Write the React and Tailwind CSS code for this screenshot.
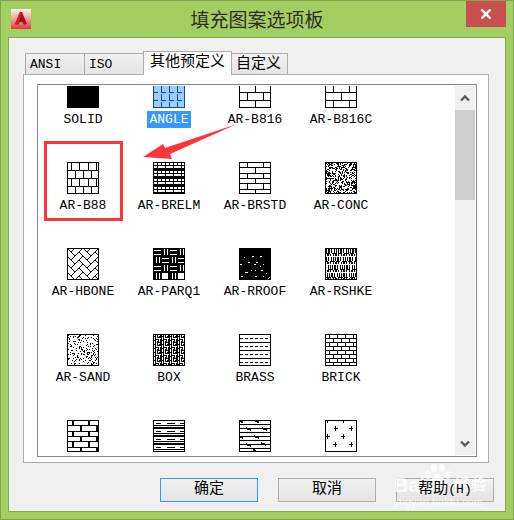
import { useState } from 'react';

const tabs = ['ANSI', 'ISO', '其他预定义', '自定义'];

// Courses of bricks: [top, bottom, x of the vertical joints, joint width]
const courses = {
  'AR-B816': [[0, 8, [8, 24]], [8, 16, [16]], [16, 24, [8, 24]], [24, 31, [16]]],
  'AR-B816C': [[0, 8, [16]], [8, 16, [8, 24]], [16, 24, [16]], [24, 31, [8, 24]]],
  'AR-B88': [[0, 8, [4, 12, 21, 29]], [8, 16, [8, 16, 24]], [16, 24, [4, 12, 21, 29]], [24, 31, [8, 16, 24]]],
  'AR-BRSTD': [[0, 5, [8, 24]], [5, 11, [16]], [11, 16, [8, 24]], [16, 21, [16]], [21, 27, [8, 24]], [27, 31, [16]]],
  BRICK: [0, 4, 8, 12, 16, 20, 24, 28].map((y, i) => [
    y,
    Math.min(y + 4, 31),
    i % 2 ? [8, 16, 24] : [4, 12, 20, 28],
  ]),
  BRSTONE: [
    [0, 5, [5, 21], 2],
    [5, 11, [13, 29], 2],
    [11, 16, [5, 21], 2],
    [16, 21, [13, 29], 2],
    [21, 27, [5, 21], 2],
    [27, 31, [13, 29], 2],
  ],
};

// Small repeating bitmap for the BOX pattern
const boxTile = [
  '#.#.####',
  '#.#.#..#',
  '###.#.##',
  '#.#.####',
  '#.#.....',
  '#.####.#',
  '###..#.#',
  '#.#.##.#',
];

const roofDots = [
  [5, 9, 1], [13, 8, 2], [21, 8, 2], [9, 14, 2], [17, 14, 2], [15, 16, 2], [1, 16, 2], [24, 16, 1],
  [21, 18, 1], [12, 22, 1], [16, 22, 1], [22, 22, 2], [6, 24, 3], [27, 25, 1], [2, 28, 2],
  [16, 28, 2], [24, 28, 1], [29, 30, 1], [30, 29, 1],
];

// Simple seeded generator so speckled patterns stay the same on each render
function speckle(seed, density) {
  let s = seed;
  let d = '';
  for (let y = 1; y < 31; y++) {
    for (let x = 1; x < 31; x++) {
      s = (s * 16807) % 2147483647;
      if (s / 2147483647 < density) d += `M${x} ${y}h1v1h-1z`;
    }
  }
  return d;
}

function Bricks({ rows }) {
  return rows.map(([top, bottom, joints, w = 1]) => (
    <g key={top}>
      <rect x="0" y={bottom} width="32" height="1" />
      {joints.map((x) => (
        <rect key={x} x={x} y={top} width={w} height={bottom - top} />
      ))}
    </g>
  ));
}

function Herringbone() {
  const bricks = [];
  for (let y = -8; y < 9; y++) {
    for (let x = -8; x < 9; x++) {
      const d = (((x - y) % 4) + 4) % 4;
      if (d === 0) bricks.push([x, y, 2, 1]);
      if (d === 3) bricks.push([x, y, 1, 2]);
    }
  }
  return (
    <svg x="0" y="0" width="32" height="32">
      <g transform="translate(16 16) rotate(45) scale(5.657)" fill="none" stroke="#000" strokeWidth="0.18">
        {bricks.map(([x, y, w, h]) => (
          <rect key={`${x},${y}`} x={x} y={y} width={w} height={h} />
        ))}
      </g>
    </svg>
  );
}

function Parquet() {
  const blocks = [];
  for (let r = 0; r < 4; r++) {
    for (let c = 0; c < 4; c++) {
      const x = c * 8;
      const y = r * 8;
      if (r === 3 && c % 2) blocks.push(`M${x + 1} ${y + 1}h6v6h-6z`);
      else if ((r + c) % 2 || r === 3) blocks.push(`M${x + 3} ${y + 1}h1v6h-1zM${x + 6} ${y + 1}h1v6h-1z`);
      else blocks.push(`M${x + 1} ${y + 2}h7v1h-7zM${x + 1} ${y + 6}h7v1h-7z`);
    }
  }
  return (
    <>
      <rect width="32" height="32" />
      <path d={blocks.join('')} fill="#fff" />
    </>
  );
}

function PatternBody({ name }) {
  if (courses[name]) return <Bricks rows={courses[name]} />;
  switch (name) {
    case 'SOLID':
      return <rect width="32" height="32" />;
    case 'ANGLE':
      return [0, 8, 16, 24, 32].map((y) =>
        [0, 8, 16, 24].map((x) => (
          <path key={`${x},${y}`} d={`M${x} ${y}h5v1h-5zM${x} ${y - 6}h1v6h-1z`} />
        ))
      );
    case 'AR-BRELM':
      return (
        <>
          <rect width="32" height="32" />
          {[0, 8, 16, 24].map((y) => (
            <g key={y} fill="none" stroke="#fff">
              <path d={`M1 ${y + 2}h30`} strokeWidth="2" strokeDasharray="3 1" />
              <path d={`M1 ${y + 5}h30`} strokeWidth="2" strokeDasharray="7 1" strokeDashoffset="4" />
            </g>
          ))}
        </>
      );
    case 'AR-CONC':
      return <path d={speckle(4217, 0.46)} />;
    case 'AR-SAND':
      return <path d={speckle(911, 0.2)} />;
    case 'AR-HBONE':
      return <Herringbone />;
    case 'AR-PARQ1':
      return <Parquet />;
    case 'AR-RROOF':
      return (
        <>
          <rect width="32" height="32" />
          {roofDots.map(([x, y, w]) => (
            <rect key={`${x},${y}`} x={x} y={y} width={w} height="1" fill="#fff" />
          ))}
        </>
      );
    case 'AR-RSHKE':
      return [0, 8, 16, 24].map((y, i) => (
        <g key={y} fill="none" stroke="#000">
          <path d={`M1 ${y + 3}h30`} strokeWidth="4" strokeDasharray="1 1 2 1 1 2 1 1 1 1" strokeDashoffset={i * 3} />
          <path d={`M1 ${y + 5.5}h30`} strokeDasharray="4 2 5 1" strokeDashoffset={i * 2} />
          <path d={`M2 ${y + 7}h29`} strokeWidth="2" strokeDasharray="2 1 1 2 1 1" />
        </g>
      ));
    case 'BOX':
      return [0, 8, 16, 24].map((oy) =>
        [0, 8, 16, 24].map((ox) => (
          <path
            key={`${ox},${oy}`}
            d={boxTile
              .flatMap((row, y) => [...row].map((c, x) => (c === '#' ? `M${ox + x} ${oy + y}h1v1h-1z` : '')))
              .join('')}
          />
        ))
      );
    case 'BRASS':
      return (
        <g fill="none" stroke="#000">
          <path d="M0 8.5h32M0 16.5h32M0 24.5h32" />
          <path d="M1 4.5h30M1 12.5h30M1 20.5h30M1 28.5h30" strokeDasharray="3 2" />
        </g>
      );
    case 'CLAY':
      return (
        <g fill="none" stroke="#000">
          <path d="M0 5.5h32M0 13.5h32M0 21.5h32M0 29.5h32" />
          <path d="M0 8h32M0 16h32M0 24h32" strokeWidth="2" />
          <path d="M3 3.5h5M14 3.5h8M27 3.5h4M3 11.5h5M14 11.5h8M27 11.5h4M3 19.5h5M14 19.5h8M27 19.5h4M3 27.5h5M14 27.5h8M27 27.5h4" />
        </g>
      );
    case 'CORK':
      return (
        <g fill="none" stroke="#000">
          <path d="M0 4.5h32M0 8.5h32M0 12.5h32M0 16.5h32M0 20.5h32M0 24.5h32M0 28.5h32" />
          <path
            d="M1 1l3 1M16 1l4 1M7 8l5 2M23 8l5 2M0 16l4 2M15 16l5 2M7 24l5 2M22 23l5 2M14 30l3 1"
            strokeWidth="2"
          />
        </g>
      );
    case 'CROSS':
      return (
        <path
          d="M2.5 0v3M18.5 0v3M9 8.5h4M10.5 6v5M24 8.5h4M26.5 6v5M1 16.5h4M2.5 14v5M16 16.5h4M18.5 14v5M8 24.5h4M10.5 22v5M24 24.5h4M26.5 22v5"
          fill="none"
          stroke="#000"
        />
      );
    default:
      return null;
  }
}

const patterns = [
  'SOLID', 'ANGLE', 'AR-B816', 'AR-B816C',
  'AR-B88', 'AR-BRELM', 'AR-BRSTD', 'AR-CONC',
  'AR-HBONE', 'AR-PARQ1', 'AR-RROOF', 'AR-RSHKE',
  'AR-SAND', 'BOX', 'BRASS', 'BRICK',
  'BRSTONE', 'CLAY', 'CORK', 'CROSS',
];

function Swatch({ name, selected }) {
  return (
    <svg
      width="32"
      height="32"
      viewBox="0 0 32 32"
      shapeRendering="crispEdges"
      className={selected ? 'block fill-[#0f4a8c]' : 'block fill-black'}
      aria-hidden="true"
    >
      <rect width="32" height="32" fill={selected ? '#99ccff' : '#fff'} />
      <PatternBody name={name} />
      <rect x="0.5" y="0.5" width="31" height="31" fill="none" stroke={selected ? '#0f4a8c' : '#000'} />
    </svg>
  );
}

function PatternItem({ name, hideLabel, selected, marked, onSelect }) {
  return (
    <button type="button" aria-label={name} onClick={onSelect} className="relative flex h-[86px] flex-col items-center">
      <Swatch name={name} selected={selected} />
      {!hideLabel && (
        <span
          className={
            selected
              ? 'mt-[3px] bg-[#3399ff] px-[2px] text-[13px] leading-[17px] text-white'
              : 'mt-[3px] px-[2px] text-[13px] leading-[17px] text-black'
          }
        >
          {name}
        </span>
      )}
      {marked && <span className="absolute -top-[21px] left-[4px] h-[80px] w-[79px] border-[3px] border-[#fb3538]" />}
    </button>
  );
}

function ScrollButton({ label, d }) {
  return (
    <button type="button" aria-label={label} className="flex h-6 items-center justify-center">
      <svg width="10" height="7" viewBox="0 0 10 7" fill="none" stroke="#5a5a5a" strokeWidth="2.4" aria-hidden="true">
        <path d={d} />
      </svg>
    </button>
  );
}

function Logo() {
  return (
    <svg width="20" height="20" viewBox="0 0 20 20" aria-hidden="true">
      <defs>
        <linearGradient id="logoBg" x1="0" y1="0" x2="0" y2="1">
          <stop offset="0" stopColor="#fdeeea" />
          <stop offset="0.5" stopColor="#f3a19c" />
          <stop offset="1" stopColor="#dc3a40" />
        </linearGradient>
      </defs>
      <rect width="20" height="20" fill="url(#logoBg)" />
      <path d="M9 3h2l5 12-3 1-2-3H9l-2 3-3-1z" fill="#b5161c" />
      <path d="M10 7l2 4H8z" fill="#8c0f15" />
      <path d="M9 3L4 15l3 1 3-9z" fill="#cf2228" />
    </svg>
  );
}

function Watermark() {
  return (
    <div className="pointer-events-none absolute right-[27px] bottom-[11px] z-10 w-[92px] font-['Liberation_Sans','Noto_Sans_CJK_SC',sans-serif] text-white opacity-75">
      <svg className="absolute -top-[12px] left-[30px]" width="28" height="30" viewBox="0 0 28 30" fill="#fff" aria-hidden="true">
        <ellipse cx="4" cy="13" rx="3" ry="4" />
        <ellipse cx="10" cy="6" rx="3" ry="4" />
        <ellipse cx="18" cy="6" rx="3" ry="4" />
        <ellipse cx="24" cy="13" rx="3" ry="4" />
        <path d="M14 12c4 0 5 4 8 7 3 4 1 9-3 9-2 0-3-1-5-1s-3 1-5 1c-4 0-6-5-3-9 3-3 4-7 8-7z" />
      </svg>
      <div className="flex items-center justify-between text-[20px] leading-[22px] font-bold">
        <span>Bai</span>
        <span className="text-[16px]">经验</span>
      </div>
      <div className="text-[11px] leading-[12px]">jingyan.baidu.com</div>
    </div>
  );
}

const buttonClass =
  'h-6 w-[98px] border bg-linear-to-b from-[#f0f0f0] to-[#e4e4e4] text-center text-[15px] leading-[22px] text-black';

export default function App() {
  const [tab, setTab] = useState('其他预定义');
  const [selected, setSelected] = useState('ANGLE');

  return (
    <div className="relative flex h-screen min-h-[300px] flex-col border border-[#82a44f] bg-[#a3cf62] px-[7px] pb-[7px] font-['Liberation_Mono','Noto_Sans_CJK_SC',monospace]">
      <header className="flex h-9 shrink-0 items-start">
        <div className="flex w-10 pt-2 pl-[3px]">
          <Logo />
        </div>
        <h1 className="flex-1 pt-[4px] text-center font-['Noto_Sans_CJK_SC',sans-serif] text-[19px] leading-[28px] text-[#2b2f26]">
          填充图案选项板
        </h1>
        <button type="button" aria-label="关闭" className="flex h-[26px] w-10 items-center justify-center bg-[#c75050]">
          <svg width="12" height="10" viewBox="0 0 12 10" stroke="#fff" strokeWidth="2.4" aria-hidden="true">
            <path d="M1.5 .5l9 9M10.5 .5l-9 9" />
          </svg>
        </button>
      </header>

      <main className="flex min-h-0 flex-1 flex-col border border-[#86a653] bg-[#f0f0f0] pt-[13px] pr-[16px] pb-[9px] pl-[14px]">
        <div role="tablist" className="flex h-[23px] shrink-0 items-end pl-[2px] text-[15px]">
          {tabs.map((t, i) => (
            <button
              key={t}
              type="button"
              role="tab"
              aria-selected={t === tab}
              onClick={() => setTab(t)}
              className={
                t === tab
                  ? 'relative z-10 -mb-px h-6 border border-b-0 border-[#acacac] bg-white px-[6px] pb-[2px] leading-[20px]'
                  : i < 2
                    ? 'h-[21px] w-[59px] border border-r-0 border-b-0 border-[#acacac] bg-linear-to-b from-[#f0f0f0] to-[#e5e5e5] pt-px pl-1 text-left text-[13px] leading-[20px]'
                    : 'h-[21px] border border-b-0 border-l-0 border-[#acacac] bg-linear-to-b from-[#f0f0f0] to-[#e5e5e5] pt-px pr-[6px] pl-1 leading-[20px]'
              }
            >
              {t}
            </button>
          ))}
        </div>

        <section role="tabpanel" className="flex min-h-0 flex-1 border border-[#acacac] bg-white pt-[9px] pr-[11px] pb-[5px] pl-[13px]">
          <div className="flex min-w-0 flex-1 border border-[#828790] p-px">
            <div className="min-w-0 flex-1 overflow-hidden">
              <div className="relative -mt-[10px] grid grid-cols-[repeat(auto-fill,86px)] pl-px">
                {patterns.map((name, i) => (
                  <PatternItem
                    key={name}
                    name={name}
                    hideLabel={i >= 16}
                    selected={name === selected}
                    marked={name === 'AR-B88'}
                    onSelect={() => setSelected(name)}
                  />
                ))}
                <svg
                  className="pointer-events-none absolute top-[48px] left-[104px]"
                  width="94"
                  height="36"
                  viewBox="0 0 94 36"
                  fill="#fb3538"
                  aria-hidden="true"
                >
                  <path d="M0 33L20 20l2 4L94 0 27 30l2 5z" />
                </svg>
              </div>
            </div>
            <div className="flex w-5 flex-col bg-[#f0f0f0]">
              <ScrollButton label="向上滚动" d="M1 5.5l4-4 4 4" />
              <div className="h-[90px] bg-[#cdcdcd]" />
              <div className="flex-1" />
              <ScrollButton label="向下滚动" d="M1 1.5l4 4 4-4" />
            </div>
          </div>
        </section>

        <footer className="-mr-[5px] flex shrink-0 justify-end gap-5 pt-[15px]">
          <button type="button" className={`${buttonClass} border-[#3399ff]`}>确定</button>
          <button type="button" className={`${buttonClass} border-[#acacac]`}>取消</button>
          <button type="button" className={`${buttonClass} border-[#acacac]`}>
            <span className="relative z-20">
              帮助<span className="text-[13px]">(H)</span>
            </span>
          </button>
        </footer>
      </main>
      <Watermark />
    </div>
  );
}
